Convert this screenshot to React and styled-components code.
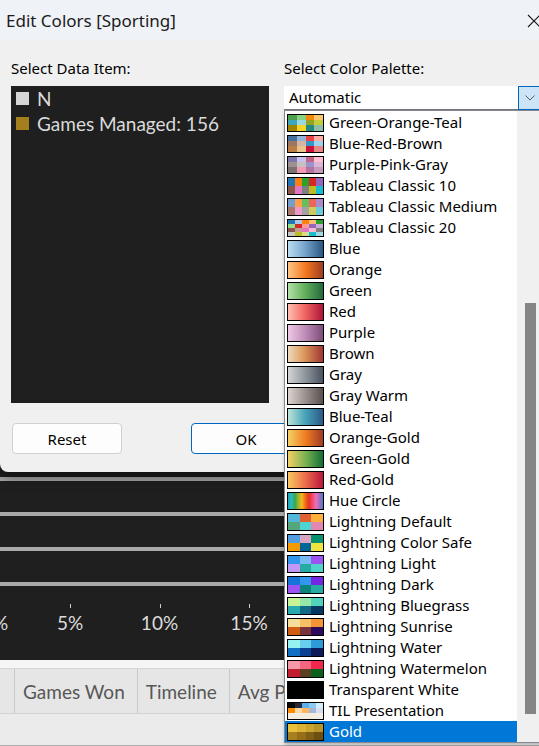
import React from "react";
import styled, { createGlobalStyle } from "styled-components";

const ui = `"Noto Sans", "Open Sans", "DejaVu Sans", sans-serif`;
const viz = `"Lato", "Noto Sans", sans-serif`;

const Global = createGlobalStyle`
  html, body { margin: 0; padding: 0; overflow: hidden; background: #ebebeb; }
  * { box-sizing: border-box; }
`;

const palettes = [
  { name: "Green-Orange-Teal", cols: 4, colors: ["#4e9f50", "#87d180", "#ef8a0c", "#fcc66d", "#3ca8bc", "#98d9e4", "#94a323", "#c3ce3d", "#a08400", "#f7d42a", "#26897e", "#8dbfa8"] },
  { name: "Blue-Red-Brown", cols: 4, colors: ["#466f9d", "#91b3d7", "#ed444a", "#feaea5", "#9d7660", "#d7b5a6", "#3896c4", "#a0d4ee", "#ba7e45", "#e9c28d", "#c8133b", "#ea8783"] },
  { name: "Purple-Pink-Gray", cols: 4, colors: ["#8074a8", "#c6c1f0", "#c46487", "#ffbed1", "#9c9290", "#c5bfbe", "#9b93c9", "#ddb5d5", "#7c7270", "#f498b6", "#b173a0", "#c799bc"] },
  { name: "Tableau Classic 10", cols: 5, colors: ["#1f77b4", "#ff7f0e", "#2ca02c", "#d62728", "#9467bd", "#8c564b", "#e377c2", "#7f7f7f", "#bcbd22", "#17becf"] },
  { name: "Tableau Classic Medium", cols: 5, colors: ["#729ece", "#ff9e4a", "#67bf5c", "#ed665d", "#ad8bc9", "#a8786e", "#ed97ca", "#a2a2a2", "#cdcc5d", "#6dccda"] },
  { name: "Tableau Classic 20", cols: 5, colors: ["#1f77b4", "#aec7e8", "#ff7f0e", "#ffbb78", "#2ca02c", "#98df8a", "#d62728", "#ff9896", "#9467bd", "#c5b0d5", "#8c564b", "#c49c94", "#e377c2", "#f7b6d2", "#7f7f7f", "#c7c7c7", "#bcbd22", "#dbdb8d", "#17becf", "#9edae5"] },
  { name: "Blue", stops: ["#b9ddf1", "#7ca8d0 45%", "#2a5783"] },
  { name: "Orange", stops: ["#ffc685", "#f47a1f 50%", "#9e3d22"] },
  { name: "Green", stops: ["#b3e0a6", "#5fae5a 50%", "#24693d"] },
  { name: "Red", stops: ["#ffbeb2", "#f26c64 45%", "#ae123a"] },
  { name: "Purple", stops: ["#eec9e5", "#c391bb 45%", "#7c4d79"] },
  { name: "Brown", stops: ["#eedbbd", "#dd9a5c 45%", "#9f3632"] },
  { name: "Gray", stops: ["#d5d5d5", "#8d959c 50%", "#49525e"] },
  { name: "Gray Warm", stops: ["#dcd4d0", "#9a908d 50%", "#59504e"] },
  { name: "Blue-Teal", stops: ["#bce4d8", "#45a2b9 50%", "#2c5985"] },
  { name: "Orange-Gold", stops: ["#f4d166", "#f07d21 50%", "#9e3a26"] },
  { name: "Green-Gold", stops: ["#f4d166", "#6fad50 55%", "#146c36"] },
  { name: "Red-Gold", stops: ["#f8c960", "#ed6c4a 50%", "#b8173c"] },
  { name: "Hue Circle", stops: ["#1ba3c6", "#30bcad", "#33a65c", "#a2b627", "#f8b620", "#f06719", "#e03426", "#f64971", "#eb73b3", "#a26dc2", "#4f7cba"] },
  { name: "Lightning Default", cols: 3, colors: ["#52b7d8", "#e16032", "#ffb03b", "#54a77b", "#4fd2d2", "#e287b2"] },
  { name: "Lightning Color Safe", cols: 3, colors: ["#529ee0", "#d9a6c2", "#08916d", "#f59b00", "#006699", "#f0e442"] },
  { name: "Lightning Light", cols: 3, colors: ["#3296ed", "#77b9f2", "#9d53f2", "#c398f5", "#26aba4", "#4ed4cd"] },
  { name: "Lightning Dark", cols: 3, colors: ["#1674d9", "#3296ed", "#7526e3", "#9d53f2", "#0b827c", "#26aba4"] },
  { name: "Lightning Bluegrass", cols: 3, colors: ["#c7f296", "#94e7a8", "#51d2bb", "#27aab0", "#116985", "#053661"] },
  { name: "Lightning Sunrise", cols: 3, colors: ["#f5de99", "#f5c066", "#f59533", "#d25d12", "#7a3439", "#2c0a5c"] },
  { name: "Lightning Water", cols: 3, colors: ["#96f2ee", "#68ceee", "#2d9cd6", "#1170c4", "#0a4192", "#0c1c5a"] },
  { name: "Lightning Watermelon", cols: 3, colors: ["#f598a7", "#f56580", "#f4284e", "#c11c2f", "#5c3f22", "#0a611b"] },
  { name: "Transparent White", cols: 1, colors: ["#000000"] },
  { name: "TIL Presentation", cols: 5, colors: ["#0a0a0a", "#262a3a", "#5ab0f0", "#8ec8f4", "#d6ecfb", "#ff8c00", "#ffd8a8", "#ffb65c", "#a9b5d9", "#d7dcef", "#f4ebe3", "#f4ebe3", "#f4ebe3", "#f4ebe3", "#f4ebe3"] },
  { name: "Gold", cols: 4, colors: ["#e7c03c", "#dbb236", "#cba42e", "#b8952a", "#a87f1d", "#946e19", "#7f5e15", "#6d5011"] },
];

const selectedPalette = "Gold";

const dataItems = [
  { label: "N", color: "#d6d6d6" },
  { label: "Games Managed: 156", color: "#a57f1e" },
];

const axisTicks = [
  { label: "0%", x: -5, tick: false },
  { label: "5%", x: 70, tick: true },
  { label: "10%", x: 159.5, tick: true },
  { label: "15%", x: 249, tick: true },
];

const tabs = [
  { label: "", width: 15 },
  { label: "Games Won" },
  { label: "Timeline" },
  { label: "Avg Points" },
];

/* ---------- page / viz ---------- */
const Page = styled.div`
  position: relative;
  width: 539px;
  height: 746px;
  overflow: hidden;
  display: flex;
  flex-direction: column;
`;

const VizPane = styled.div`
  height: 660px;
  background: #1f1f1f;
  display: flex;
  flex-direction: column;
  justify-content: flex-end;
`;

const BarGroup = styled.div`
  display: flex;
  flex-direction: column;
  gap: 31px;
`;

const BarLine = styled.div`
  height: 4px;
  background: #a9a9a9;
`;

const Axis = styled.div`
  position: relative;
  height: 74px;
  font-family: ${viz};
  font-size: 19px;
  color: #dcdcdc;
`;

const Tick = styled.div`
  position: absolute;
  top: 18px;
  width: 1px;
  height: 4px;
  background: #cfcfcf;
`;

const AxisLabel = styled.div`
  position: absolute;
  top: 26px;
  line-height: 22px;
  transform: translateX(-50%);
  white-space: nowrap;
`;

const TabBar = styled.div`
  flex: 1;
  display: flex;
  flex-direction: column;
`;

const TopStrip = styled.div`
  height: 8px;
  background: #f5f5f5;
`;

const TabRow = styled.div`
  height: 46px;
  display: flex;
  background: #e6e6e6;
  border-top: 1px solid #d6d6d6;
  border-bottom: 1px solid #d2d2d2;
`;

const Tab = styled.div`
  flex: none;
  width: ${(p) => (p.$width ? `${p.$width}px` : "auto")};
  padding: ${(p) => (p.$width ? "0" : "0 12px 0 8px")};
  display: flex;
  align-items: center;
  border-right: 1px solid #c9c9c9;
  font-family: ${viz};
  font-size: 19px;
  color: #575757;
  white-space: nowrap;
`;

const TabFooter = styled.div`
  flex: 1;
  background: #ebebeb;
  border-bottom: 1px solid #ababab;
`;

/* ---------- dialog ---------- */
const Dialog = styled.div`
  position: absolute;
  left: 0;
  top: 0;
  width: 556px;
  height: 472px;
  background: #f0f0f0;
  border-bottom-left-radius: 8px;
  box-shadow: 0 5px 14px rgba(0, 0, 0, 0.5);
  display: flex;
  flex-direction: column;
  font-family: ${ui};
  color: #000;
`;

const TitleBar = styled.div`
  height: 41px;
  flex: none;
  display: flex;
  align-items: center;
  justify-content: space-between;
  padding-left: 6px;
  background: #eff2f6;
  font-size: 17px;
  color: #1b1b1b;
`;

const CloseButton = styled.div`
  width: 44px;
  height: 41px;
  display: flex;
  align-items: center;
  justify-content: center;
`;

const DialogBody = styled.div`
  flex: 1;
  display: grid;
  grid-template-columns: 258px 1fr;
  grid-template-rows: auto auto 1fr;
  column-gap: 15px;
  padding: 17px 0 0 11px;
`;

const FieldLabel = styled.div`
  font-size: 15px;
  line-height: 20px;
  margin-bottom: 8px;
  white-space: nowrap;
`;

const DataList = styled.div`
  height: 317px;
  background: #1f1f1f;
  padding: 0 5px;
`;

const DataItem = styled.div`
  height: 25px;
  display: flex;
  align-items: center;
  gap: 8px;
  font-family: ${viz};
  font-size: 19px;
  color: #dadada;
`;

const ItemSquare = styled.span`
  width: 13px;
  height: 13px;
  flex: none;
  background: ${(p) => p.$c};
`;

const ButtonRow = styled.div`
  grid-column: 1 / -1;
  display: flex;
  gap: 69px;
  margin-top: 20px;
  padding-left: 1px;
`;

const Button = styled.div`
  width: 110px;
  height: 31px;
  display: flex;
  align-items: center;
  justify-content: center;
  background: #fdfdfd;
  border: 1px solid ${(p) => (p.$primary ? "#0067c0" : "#d0d0d0")};
  border-radius: 4px;
  font-size: 15px;
`;

const Combo = styled.div`
  position: relative;
  width: 258px;
  height: 24px;
  display: flex;
  background: #fff;
`;

const ComboText = styled.div`
  flex: 1;
  padding-left: 5px;
  font-size: 15px;
  line-height: 23px;
  border-bottom: 1px solid #7a7a7a;
`;

const ArrowButton = styled.div`
  width: 24px;
  display: flex;
  align-items: center;
  justify-content: center;
  background: #cce4f7;
  border: 1px solid #0067c0;
`;

const DropList = styled.div`
  position: absolute;
  left: 0;
  top: 24px;
  width: 258px;
  display: flex;
  background: #fff;
  border: 1px solid #828790;
  box-shadow: 1px 2px 4px rgba(0, 0, 0, 0.25);
  z-index: 3;
`;

const Options = styled.div`
  width: 232px;
  padding-top: 1px;
`;

const Option = styled.div`
  height: 21px;
  display: flex;
  align-items: center;
  gap: 5px;
  padding-left: 2px;
  font-size: 15px;
  line-height: 21px;
  white-space: nowrap;
  background: ${(p) => (p.$selected ? "#0078d7" : "transparent")};
  color: ${(p) => (p.$selected ? "#fff" : "#000")};
`;

const Swatch = styled.span`
  flex: none;
  width: 37px;
  height: 18px;
  border: 1px solid #000;
  display: grid;
  grid-template-columns: repeat(${(p) => p.$cols || 1}, 1fr);
  background: ${(p) => p.$bg || "transparent"};
`;

const Cell = styled.span`
  background: ${(p) => p.$c};
`;

const ScrollTrack = styled.div`
  flex: 1;
  background: #f0f0f0;
  padding: 192px 0 0 8px;
`;

const ScrollThumb = styled.div`
  width: 11px;
  height: 411px;
  background: #858585;
`;

function PaletteSwatch({ p }) {
  if (p.stops) {
    return <Swatch $bg={`linear-gradient(90deg, ${p.stops.join(", ")})`} />;
  }
  return (
    <Swatch $cols={p.cols}>
      {p.colors.map((c, i) => (
        <Cell key={i} $c={c} />
      ))}
    </Swatch>
  );
}

export default function App() {
  return (
    <>
      <Global />
      <Page>
        <VizPane>
          <BarGroup>
            {[0, 1, 2, 3].map((i) => (
              <BarLine key={i} />
            ))}
          </BarGroup>
          <Axis>
            {axisTicks.map((t) => (
              <React.Fragment key={t.label}>
                {t.tick && <Tick style={{ left: t.x }} />}
                <AxisLabel style={{ left: t.x }}>{t.label}</AxisLabel>
              </React.Fragment>
            ))}
          </Axis>
        </VizPane>
        <TabBar>
          <TopStrip />
          <TabRow>
            {tabs.map((t, i) => (
              <Tab key={i} $width={t.width}>
                {t.label}
              </Tab>
            ))}
          </TabRow>
          <TabFooter />
        </TabBar>

        <Dialog>
          <TitleBar>
            <span>Edit Colors [Sporting]</span>
            <CloseButton>
              <svg width="14" height="14" viewBox="0 0 14 14">
                <path d="M1 1 L13 13 M13 1 L1 13" stroke="#1a1a1a" strokeWidth="1.1" fill="none" />
              </svg>
            </CloseButton>
          </TitleBar>
          <DialogBody>
            <FieldLabel>Select Data Item:</FieldLabel>
            <FieldLabel>Select Color Palette:</FieldLabel>
            <DataList>
              {dataItems.map((d) => (
                <DataItem key={d.label}>
                  <ItemSquare $c={d.color} />
                  {d.label}
                </DataItem>
              ))}
            </DataList>
            <div>
              <Combo>
                <ComboText>Automatic</ComboText>
                <ArrowButton>
                  <svg width="10" height="6" viewBox="0 0 10 6">
                    <polyline points="0.5,0.5 5,5 9.5,0.5" stroke="#5f5f5f" strokeWidth="1" fill="none" />
                  </svg>
                </ArrowButton>
                <DropList>
                  <Options>
                    {palettes.map((p) => (
                      <Option key={p.name} $selected={p.name === selectedPalette}>
                        <PaletteSwatch p={p} />
                        {p.name}
                      </Option>
                    ))}
                  </Options>
                  <ScrollTrack>
                    <ScrollThumb />
                  </ScrollTrack>
                </DropList>
              </Combo>
            </div>
            <ButtonRow>
              <Button>Reset</Button>
              <Button $primary>OK</Button>
            </ButtonRow>
          </DialogBody>
        </Dialog>
      </Page>
    </>
  );
}
